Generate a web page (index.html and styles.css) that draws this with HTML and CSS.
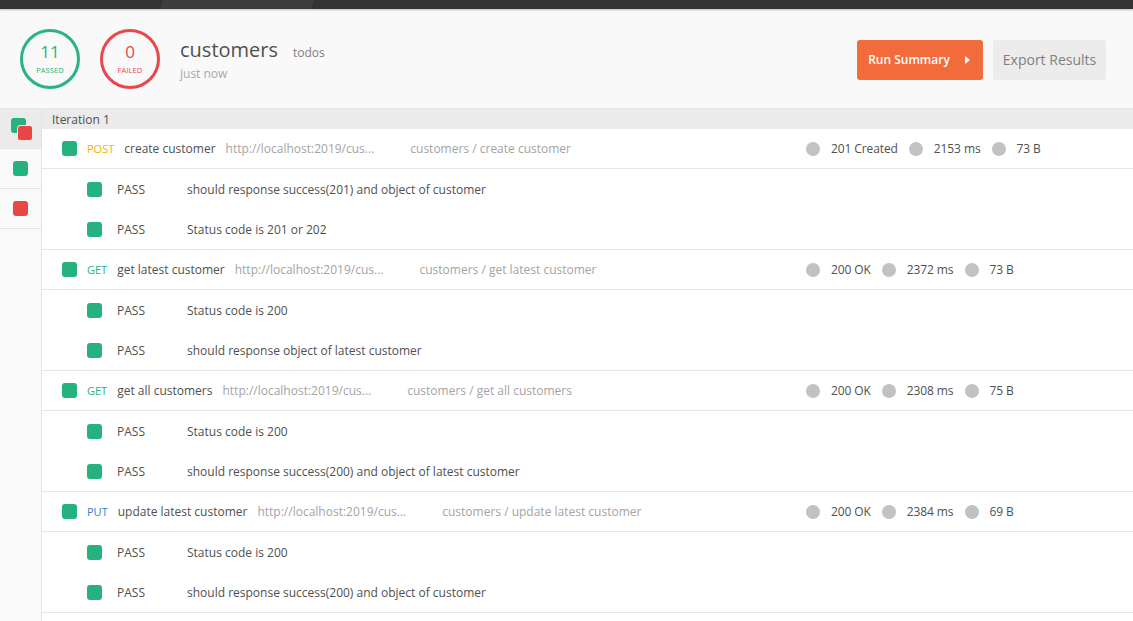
FILE: index.html
```html
<!DOCTYPE html>
<html>
<head>
<meta charset="utf-8">
<link rel="stylesheet" href="styles.css">
</head>
<body>
<div class="topbar"><div class="tab"></div></div>
<div class="header">
  <div class="ring ring-pass"><span class="ring-num">11</span><span class="ring-lbl">PASSED</span></div>
  <div class="ring ring-fail"><span class="ring-num">0</span><span class="ring-lbl">FAILED</span></div>
  <div class="title">
    <div class="title-line"><span class="title-name">customers</span><span class="title-env">todos</span></div>
    <div class="title-time">just now</div>
  </div>
  <div class="actions">
    <button class="btn btn-run">Run Summary <span class="caret"></span></button>
    <button class="btn btn-export">Export Results</button>
  </div>
</div>
<div class="body">
  <div class="sidebar">
    <div class="side-cell side-active"><span class="sq sq-green sq-back"></span><span class="sq sq-red sq-front"></span></div>
    <div class="side-cell"><span class="sq sq-green"></span></div>
    <div class="side-cell"><span class="sq sq-red"></span></div>
  </div>
  <div class="main">
    <div class="iter">Iteration 1</div>

    <div class="group">
      <div class="req">
        <span class="sq sq-green"></span>
        <span class="method m-post">POST</span>
        <span class="name">create customer</span>
        <span class="url">http://localhost:2019/cus...</span>
        <span class="path">customers / create customer</span>
        <div class="stats">
          <span class="dot"></span><span class="stat">201 Created</span>
          <span class="dot"></span><span class="stat">2153 ms</span>
          <span class="dot"></span><span class="stat">73 B</span>
        </div>
      </div>
      <div class="test"><span class="sq sq-green"></span><span class="res">PASS</span><span class="msg">should response success(201) and object of customer</span></div>
      <div class="test"><span class="sq sq-green"></span><span class="res">PASS</span><span class="msg">Status code is 201 or 202</span></div>
    </div>

    <div class="group">
      <div class="req">
        <span class="sq sq-green"></span>
        <span class="method m-get">GET</span>
        <span class="name">get latest customer</span>
        <span class="url">http://localhost:2019/cus...</span>
        <span class="path">customers / get latest customer</span>
        <div class="stats">
          <span class="dot"></span><span class="stat">200 OK</span>
          <span class="dot"></span><span class="stat">2372 ms</span>
          <span class="dot"></span><span class="stat">73 B</span>
        </div>
      </div>
      <div class="test"><span class="sq sq-green"></span><span class="res">PASS</span><span class="msg">Status code is 200</span></div>
      <div class="test"><span class="sq sq-green"></span><span class="res">PASS</span><span class="msg">should response object of latest customer</span></div>
    </div>

    <div class="group">
      <div class="req">
        <span class="sq sq-green"></span>
        <span class="method m-get">GET</span>
        <span class="name">get all customers</span>
        <span class="url">http://localhost:2019/cus...</span>
        <span class="path">customers / get all customers</span>
        <div class="stats">
          <span class="dot"></span><span class="stat">200 OK</span>
          <span class="dot"></span><span class="stat">2308 ms</span>
          <span class="dot"></span><span class="stat">75 B</span>
        </div>
      </div>
      <div class="test"><span class="sq sq-green"></span><span class="res">PASS</span><span class="msg">Status code is 200</span></div>
      <div class="test"><span class="sq sq-green"></span><span class="res">PASS</span><span class="msg">should response success(200) and object of latest customer</span></div>
    </div>

    <div class="group">
      <div class="req">
        <span class="sq sq-green"></span>
        <span class="method m-put">PUT</span>
        <span class="name">update latest customer</span>
        <span class="url">http://localhost:2019/cus...</span>
        <span class="path">customers / update latest customer</span>
        <div class="stats">
          <span class="dot"></span><span class="stat">200 OK</span>
          <span class="dot"></span><span class="stat">2384 ms</span>
          <span class="dot"></span><span class="stat">69 B</span>
        </div>
      </div>
      <div class="test"><span class="sq sq-green"></span><span class="res">PASS</span><span class="msg">Status code is 200</span></div>
      <div class="test"><span class="sq sq-green"></span><span class="res">PASS</span><span class="msg">should response success(200) and object of customer</span></div>
    </div>
  </div>
</div>
</body>
</html>
```

FILE: styles.css
```css
* { box-sizing: border-box; }
html, body { margin: 0; padding: 0; overflow: hidden; }
body {
  font-family: "Open Sans", "Liberation Sans", sans-serif;
  font-size: 12px;
  color: #505050;
  background: #fff;
  width: 1133px;
  height: 621px;
}
.topbar {
  height: 9px;
  background: #333333;
  box-shadow: 0 1px 2px rgba(0,0,0,0.25);
  position: relative;
  z-index: 2;
}
.tab {
  margin-left: 160px;
  width: 154px;
  height: 9px;
  background: #3e3e3e;
  clip-path: polygon(3px 0, 100% 0, calc(100% - 3px) 100%, 0 100%);
}
.header {
  height: 100px;
  background: #f9f9f9;
  border-bottom: 1px solid #e6e6e6;
  display: flex;
  align-items: center;
  padding: 0 27px 0 20px;
}
.ring {
  width: 60px;
  height: 60px;
  border-radius: 50%;
  border: 3px solid;
  display: flex;
  flex-direction: column;
  align-items: center;
  justify-content: center;
  margin-right: 20px;
}
.ring-pass { border-color: #2bb381; color: #2bb381; }
.ring-fail { border-color: #e9484a; color: #e9484a; }
.ring-num { font-size: 17px; line-height: 20px; margin-top: 0; }
.ring-lbl { font-size: 7.5px; line-height: 10px; margin-top: 3px; letter-spacing: 0.1px; }
.title { margin-top: 2px; }
.title-line { display: flex; align-items: baseline; }
.title-name { font-size: 20px; color: #505050; line-height: 26px; }
.title-env { font-size: 12px; color: #808080; margin-left: 15px; }
.title-time { font-size: 12px; color: #a8a8a8; margin-top: 2px; }
.actions { margin-left: auto; display: flex; gap: 10px; margin-top: 2px; }
.btn {
  font-family: "Open Sans", "Liberation Sans", sans-serif;
  height: 40px;
  border: none;
  border-radius: 3px;
  padding: 0;
  display: flex;
  align-items: center;
  justify-content: center;
}
.btn-run {
  width: 126px;
  background: #f26b3a;
  color: #fff;
  font-size: 12px;
  font-weight: 600;
  padding-right: 2px;
}
.caret {
  display: inline-block;
  width: 0;
  height: 0;
  border-top: 4px solid transparent;
  border-bottom: 4px solid transparent;
  border-left: 5px solid #fff;
  margin-left: 15px;
}
.btn-export {
  width: 113px;
  background: #ececec;
  color: #808080;
  font-size: 14px;
}
.body { display: flex; height: 512px; }
.sidebar {
  width: 42px;
  background: #fafafa;
  border-right: 1px solid #e4e4e4;
}
.side-cell {
  height: 40px;
  border-bottom: 1px solid #e4e4e4;
  display: flex;
  align-items: center;
  justify-content: center;
  position: relative;
}
.side-active { background: #ebebeb; }
.sq {
  display: inline-block;
  width: 15px;
  height: 15px;
  border-radius: 3px;
  flex: none;
}
.sq-green { background: #26b27e; }
.sq-red { background: #e94646; }
.sq-back { position: absolute; left: 11px; top: 9px; }
.sq-front { position: absolute; left: 17px; top: 16px; border: 1px solid #ebebeb; width: 16px; height: 16px; }
.main { flex: 1; }
.iter {
  height: 20px;
  background: #ebebeb;
  padding-left: 10px;
  line-height: 21px;
  font-size: 12px;
  color: #505050;
}
.group { border-bottom: 1px solid #e6e6e6; }
.req {
  height: 40px;
  border-bottom: 1px solid #e6e6e6;
  display: flex;
  align-items: center;
  padding-left: 20px;
  white-space: nowrap;
}
.method { font-size: 11px; margin-left: 10px; }
.m-post { color: #f3b000; }
.m-get { color: #26b27e; }
.m-put { color: #2f80d1; }
.name { margin-left: 10px; color: #505050; }
.url { margin-left: 10px; color: #a4a4a4; }
.path { margin-left: 36px; color: #a4a4a4; }
.stats {
  margin-left: auto;
  width: 327px;
  display: flex;
  align-items: center;
}
.dot {
  width: 14px;
  height: 14px;
  border-radius: 50%;
  background: #c2c2c2;
  margin-right: 11px;
}
.stat { margin-right: 11px; color: #505050; letter-spacing: -0.1px; }
.test {
  height: 40px;
  display: flex;
  align-items: center;
  padding-left: 45px;
}
.res { width: 70px; margin-left: 15px; color: #505050; }
.msg { color: #505050; }
```
